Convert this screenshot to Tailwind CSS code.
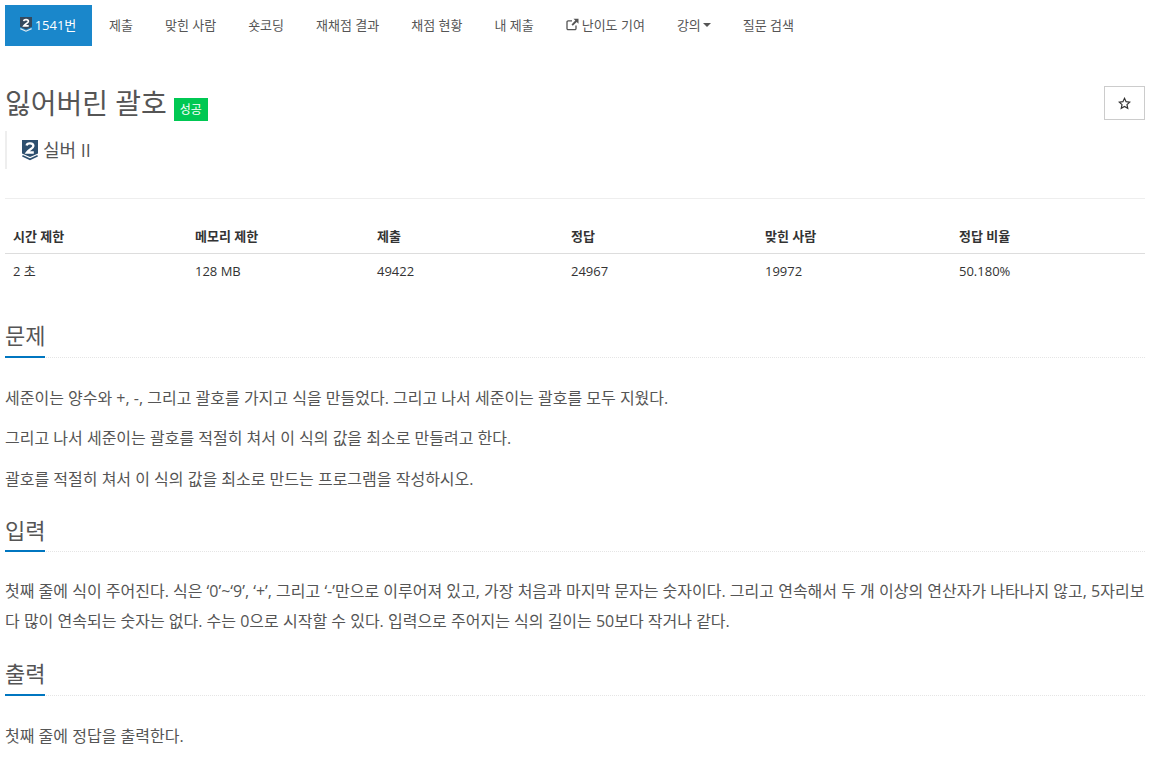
<!DOCTYPE html>
<html lang="ko">
<head>
  <meta charset="UTF-8">
  <title>잃어버린 괄호</title>
  <script src="https://cdn.jsdelivr.net/npm/@tailwindcss/browser@4"></script>
</head>
<body class="bg-white text-[#333] text-[14px] leading-[20px] font-['Open_Sans','Noto_Sans_CJK_KR',sans-serif]">
  <div class="px-[5px] pt-[5px]">

    <nav class="flex text-[13px] text-[#555] h-[41px]">
      <a class="flex items-center justify-center w-[87px] mr-[2px] pb-[2px] bg-[#1a87cb] text-white">
        <svg class="w-[12px] h-[15px] mr-[3px] ml-[-1px]" viewBox="0 0 16 20"><path fill="#34495e" d="M0 0h16v13l-8 3.500L0 13z"/><path fill="none" stroke="#dfe9f0" stroke-width="1.500" d="M.5 15.500l7.500 3.400 7.500-3.400"/><path fill="none" stroke="#fff" stroke-width="2.200" d="M4.800 5.500c.5-2.800 6.400-2.800 6.400.4 0 2.200-4.400 3-6.200 6h6.600"/></svg>
        <span>1541번</span>
      </a>
      <a class="flex items-center px-[15px] mr-[2px] pb-[2px]">제출</a>
      <a class="flex items-center px-[15px] mr-[2px] pb-[2px]">맞힌 사람</a>
      <a class="flex items-center px-[15px] mr-[2px] pb-[2px]">숏코딩</a>
      <a class="flex items-center px-[15px] mr-[2px] pb-[2px]">재채점 결과</a>
      <a class="flex items-center px-[15px] mr-[2px] pb-[2px]">채점 현황</a>
      <a class="flex items-center px-[15px] mr-[2px] pb-[2px]">내 제출</a>
      <a class="flex items-center px-[15px] mr-[2px] pb-[2px]">
        <svg class="w-[13px] h-[13px] mr-[3px]" viewBox="0 0 13 13" fill="none" stroke="#555" stroke-width="1.300"><path d="M10 7.500v3a1.200 1.200 0 0 1-1.200 1.200H2.200A1.200 1.200 0 0 1 1 10.500V4a1.200 1.200 0 0 1 1.200-1.200H6"/><path fill="#555" stroke="none" d="M7.500 .8h5v5l-1.800-1.800L6.800 7.800 5.500 6.500l3.800-3.900z"/></svg>
        <span>난이도 기여</span>
      </a>
      <a class="flex items-center px-[15px] mr-[2px] pb-[2px]">강의<span class="ml-[2px] w-0 h-0 border-x-[4px] border-x-transparent border-t-[4px] border-t-[#555]"></span></a>
      <a class="flex items-center px-[15px] mr-[2px] pb-[2px]">질문 검색</a>
    </nav>

    <div class="flex justify-between items-start mt-[40px]">
      <h1 class="flex items-end text-[28px] leading-[33px] text-[#555] h-[33px]">
        <span class="mb-[-1px]">잃어버린 괄호</span>
        <span class="ml-[7px] mb-[-2px] flex items-center justify-center w-[34px] h-[23px] bg-[#00c853] text-white text-[12px]">성공</span>
      </h1>
      <button class="flex items-center justify-center w-[41px] h-[34px] border border-[#ccc] bg-white">
        <svg class="w-[13px] h-[13px]" viewBox="0 0 24 24" fill="none" stroke="#333" stroke-width="2.200"><path d="M12 2.500l2.900 6.200 6.700.8-5 4.600 1.400 6.700-6-3.400-6 3.400 1.400-6.700-5-4.600 6.700-.8z"/></svg>
      </button>
    </div>

    <blockquote class="flex items-center mt-[11px] h-[38px] border-l-2 border-[#eee] pl-[15px] text-[18px] text-[#555]">
      <svg class="w-[16px] h-[21px] mr-[5px]" viewBox="0 0 16 21"><path fill="#2d4f6e" d="M0 0h16v13.500L8 17 0 13.500z"/><path fill="none" stroke="#2d4f6e" stroke-width="1.500" d="M.4 15.800L8 19.300l7.600-3.500"/><path fill="none" stroke="#fff" stroke-width="2.300" d="M4.600 5.500c.5-2.800 6.800-2.800 6.800.5 0 2.400-4.600 3.400-6.600 6.500h7"/></svg>
      <span>실버 II</span>
    </blockquote>

    <div class="mt-[29px] border-t border-[#eee]"></div>

    <table class="w-full mt-[20px] text-[13px] table-fixed">
      <thead>
        <tr class="border-b border-[#ddd] text-[#333]">
          <th class="w-[182px] h-[34px] px-[8px] text-left font-bold">시간 제한</th>
          <th class="w-[182px] px-[8px] text-left font-bold">메모리 제한</th>
          <th class="w-[194px] px-[8px] text-left font-bold">제출</th>
          <th class="w-[194px] px-[8px] text-left font-bold">정답</th>
          <th class="w-[194px] px-[8px] text-left font-bold">맞힌 사람</th>
          <th class="w-[194px] px-[8px] text-left font-bold">정답 비율</th>
        </tr>
      </thead>
      <tbody>
        <tr>
          <td class="h-[36px] px-[8px]">2 초</td>
          <td class="px-[8px]">128 MB</td>
          <td class="px-[8px]">49422</td>
          <td class="px-[8px]">24967</td>
          <td class="px-[8px]">19972</td>
          <td class="px-[8px]">50.180%</td>
        </tr>
      </tbody>
    </table>

    <section class="mt-[33px]">
      <div class="border-b border-dotted border-[#e5e5e5] h-[36px]">
        <h2 class="inline-block h-[36px] border-b-2 border-[#0076c0] text-[22px] leading-[24px] pt-[1px] text-[#555]">문제</h2>
      </div>
      <div class="mt-[27.6px] text-[16px] text-[#555] space-y-[15px] leading-[25.6px]">
        <p>세준이는 양수와 +, -, 그리고 괄호를 가지고 식을 만들었다. 그리고 나서 세준이는 괄호를 모두 지웠다.</p>
        <p>그리고 나서 세준이는 괄호를 적절히 쳐서 이 식의 값을 최소로 만들려고 한다.</p>
        <p>괄호를 적절히 쳐서 이 식의 값을 최소로 만드는 프로그램을 작성하시오.</p>
      </div>
    </section>

    <section class="mt-[23.4px]">
      <div class="border-b border-dotted border-[#e5e5e5] h-[36px]">
        <h2 class="inline-block h-[36px] border-b-2 border-[#0076c0] text-[22px] leading-[24px] pt-[2px] text-[#555]">입력</h2>
      </div>
      <div class="mt-[24px] text-[16px] text-[#555] leading-[30px]">
        <p>첫째 줄에 식이 주어진다. 식은 ‘0’~‘9’, ‘+’, 그리고 ‘-’만으로 이루어져 있고, 가장 처음과 마지막 문자는 숫자이다. 그리고 연속해서 두 개 이상의 연산자가 나타나지 않고, 5자리보다 많이 연속되는 숫자는 없다. 수는 0으로 시작할 수 있다. 입력으로 주어지는 식의 길이는 50보다 작거나 같다.</p>
      </div>
    </section>

    <section class="mt-[24px]">
      <div class="border-b border-dotted border-[#e5e5e5] h-[36px]">
        <h2 class="inline-block h-[36px] border-b-2 border-[#0076c0] text-[22px] leading-[24px] pt-[1px] text-[#555]">출력</h2>
      </div>
      <div class="mt-[28px] text-[16px] text-[#555] leading-[25.6px]">
        <p>첫째 줄에 정답을 출력한다.</p>
      </div>
    </section>
  </div>
</body>
</html>
